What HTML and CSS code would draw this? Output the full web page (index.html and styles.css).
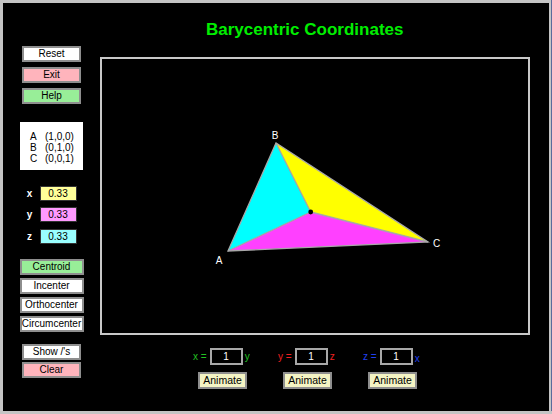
FILE: index.html
```html
<!DOCTYPE html>
<html>
<head>
<meta charset="utf-8">
<link rel="stylesheet" href="styles.css">
</head>
<body>
<div class="frame">
  <div class="sidebar">
    <div class="btn w-sm white">Reset</div>
    <div class="btn w-sm pink mt5">Exit</div>
    <div class="btn w-sm green mt5">Help</div>
    <div class="coords">
      <div class="crow"><span class="v">A</span><span>(1,0,0)</span></div>
      <div class="crow"><span class="v">B</span><span>(0,1,0)</span></div>
      <div class="crow"><span class="v">C</span><span>(0,0,1)</span></div>
    </div>
    <div class="vrow first"><span class="vl">x</span><span class="val yellow">0.33</span></div>
    <div class="vrow"><span class="vl">y</span><span class="val magenta">0.33</span></div>
    <div class="vrow z"><span class="vl">z</span><span class="val cyan">0.33</span></div>
    <div class="btn w-lg green centers">Centroid</div>
    <div class="btn w-lg white mt3">Incenter</div>
    <div class="btn w-lg white mt3">Orthocenter</div>
    <div class="btn w-lg white mt3">Circumcenter</div>
    <div class="btn w-sm white show">Show /'s</div>
    <div class="btn w-sm pink mt2">Clear</div>
  </div>
  <div class="main">
    <h1 class="title">Barycentric Coordinates</h1>
    <div class="canvas">
      <svg class="tri" width="426" height="274" viewBox="102 59 426 274">
        <polygon points="228,251 276,143 310.7,212" fill="#00ffff"/>
        <polygon points="276,143 428,242 310.7,212" fill="#ffff00"/>
        <polygon points="228,251 428,242 310.7,212" fill="#ff40ff"/>
        <g stroke="#a8a8a8" stroke-width="1.3" fill="none">
          <polygon points="228,251 276,143 428,242"/>
          <line x1="310.7" y1="212" x2="228" y2="251"/>
          <line x1="310.7" y1="212" x2="276" y2="143"/>
          <line x1="310.7" y1="212" x2="428" y2="242"/>
        </g>
        <circle cx="310.7" cy="212" r="2.4" fill="#000"/>
        <g class="lbl">
          <text x="275" y="138.5" text-anchor="middle">B</text>
          <text x="219" y="263.5" text-anchor="middle">A</text>
          <text x="436.5" y="247" text-anchor="middle">C</text>
        </g>
      </svg>
    </div>
    <div class="controls">
      <div class="grp">
        <div class="eq"><span class="g">x =</span><span class="num">1</span><span class="g">y</span></div>
        <div class="anim">Animate</div>
      </div>
      <div class="grp">
        <div class="eq"><span class="r">y =</span><span class="num">1</span><span class="r">z</span></div>
        <div class="anim">Animate</div>
      </div>
      <div class="grp">
        <div class="eq"><span class="b">z =</span><span class="num">1</span><span class="b low">x</span></div>
        <div class="anim">Animate</div>
      </div>
    </div>
  </div>
</div>
</body>
</html>
```
FILE: styles.css
```css
html, body {
  margin: 0;
  padding: 0;
  background: #c4c4c4;
}
body {
  width: 552px;
  height: 414px;
  overflow: hidden;
  font-family: "Liberation Sans", Arial, sans-serif;
}
.frame {
  box-sizing: border-box;
  width: 551px;
  height: 411px;
  background: #000;
  border-top: 3px solid #c4c4c4;
  border-left: 3px solid #c4c4c4;
  border-right: 2px solid #c4c4c4;
  box-shadow: 1px 0 0 #5b6b9c;
  display: flex;
}
.sidebar {
  width: 97px;
  display: flex;
  flex-direction: column;
  align-items: center;
  padding-top: 43px;
}
.btn {
  box-sizing: border-box;
  height: 16px;
  border: 2px solid #8e8e8e;
  font-size: 10px;
  line-height: 12px;
  text-align: center;
  color: #000;
}
.w-sm { width: 59px; }
.w-lg { width: 64px; }
.white { background: #ffffff; }
.pink { background: #ffb4bc; }
.green { background: #98ee98; }
.mt5 { margin-top: 5px; }
.mt3 { margin-top: 3px; }
.mt2 { margin-top: 2px; }
.coords {
  box-sizing: border-box;
  width: 63px;
  height: 48px;
  margin-top: 18px;
  background: #fff;
  padding: 9px 0 0 10px;
  font-size: 10px;
  line-height: 11px;
  color: #000;
}
.crow {
  display: flex;
}
.crow .v {
  width: 15px;
}
.vrow {
  width: 50px;
  display: flex;
  align-items: center;
  justify-content: space-between;
  margin-top: 6px;
}
.vrow.first { margin-top: 16px; }
.vrow.z { margin-top: 7px; }
.vl {
  color: #fff;
  font-weight: bold;
  font-size: 10px;
  width: 6px;
  text-align: center;
}
.val {
  box-sizing: border-box;
  width: 37px;
  height: 15px;
  border: 1px solid #333;
  font-size: 10px;
  line-height: 13px;
  text-align: center;
  color: #000;
}
.yellow { background: #ffff99; }
.magenta { background: #ff99ff; }
.cyan { background: #99ffff; }
.centers { margin-top: 15px; }
.show { margin-top: 12px; }
.main {
  width: 449px;
  display: flex;
  flex-direction: column;
}
.title {
  margin: 17px 0 0 106px;
  font-size: 17px;
  line-height: 20px;
  font-weight: bold;
  color: #00ee00;
}
.canvas {
  box-sizing: border-box;
  width: 430px;
  height: 278px;
  margin-top: 17px;
  border: 2px solid #c8c8c8;
}
.tri { display: block; }
.lbl text {
  fill: #fff;
  font-family: "Liberation Sans", Arial, sans-serif;
  font-size: 10px;
}
.controls {
  display: flex;
  margin: 13px 0 0 93px;
  gap: 26px;
}
.grp {
  width: 59px;
  display: flex;
  flex-direction: column;
  align-items: center;
}
.eq {
  width: 59px;
  display: flex;
  align-items: center;
  font-size: 10px;
  line-height: 17px;
}
.eq .num {
  box-sizing: border-box;
  width: 33px;
  height: 17px;
  margin: 0 2px 0 3px;
  border: 2px solid #a8a8a8;
  color: #fff;
  text-align: center;
  line-height: 13px;
}
.g { color: #22c022; }
.r { color: #f02020; }
.b { color: #2040f0; }
.low { position: relative; top: 2px; }
.anim {
  box-sizing: border-box;
  width: 49px;
  height: 17px;
  margin-top: 7px;
  border: 2px solid #8e8e8e;
  background: #f4f4c4;
  font-size: 10.5px;
  line-height: 13px;
  text-align: center;
  color: #000;
}
```
